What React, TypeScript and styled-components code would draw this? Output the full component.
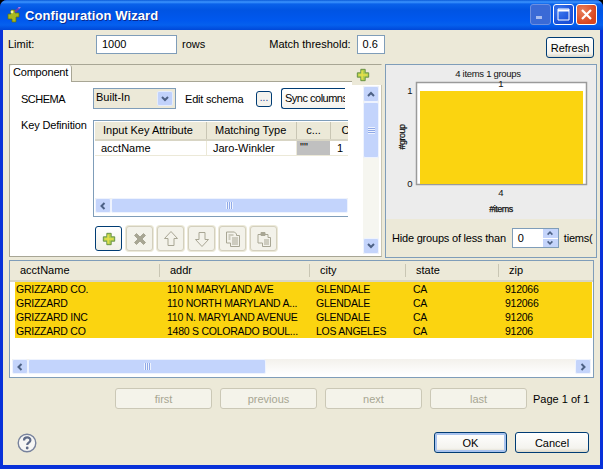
import { FC, ReactNode } from "react";
import styled, { createGlobalStyle } from "styled-components";

const GlobalStyle = createGlobalStyle`
  html, body {
    margin: 0;
    padding: 0;
    background: #000;
  }
  * {
    box-sizing: border-box;
  }
`;

const FONT = `"Liberation Sans", Arial, sans-serif`;
const FIELD_BORDER = "#7f9db9";
const FACE = "#ece9d8";
const YELLOW = "#fbd410";

const Window = styled.div`
  width: 603px;
  height: 469px;
  display: flex;
  flex-direction: column;
  overflow: hidden;
  border-radius: 7px 7px 0 0;
  background: #0831d9;
  font: 11px ${FONT};
  color: #000;
`;

const TitleBar = styled.div`
  height: 30px;
  flex: none;
  display: flex;
  align-items: center;
  padding: 0 6px 0 6px;
  background: linear-gradient(
    180deg,
    #0a5ad8 0,
    #3d95ff 2px,
    #0a62ea 4px,
    #0054e3 10px,
    #0058ee 20px,
    #0560ee 25px,
    #0048d8 30px
  );
`;

const TitleText = styled.span`
  margin-left: 3px;
  font: bold 13px ${FONT};
  letter-spacing: 0.1px;
  color: #fff;
  text-shadow: 1px 1px 0 #0a2a90;
`;

const CaptionButtons = styled.div`
  margin-left: auto;
  display: flex;
  gap: 2px;
  margin-top: -1px;
`;

const CaptionButton = styled.div<{ $close?: boolean; $off?: boolean }>`
  width: 21px;
  height: 21px;
  display: flex;
  align-items: center;
  justify-content: center;
  border: 1px solid ${(p) => (p.$off ? "#6d8fe0" : "#fff")};
  border-radius: 3px;
  background: ${(p) =>
    p.$close
      ? "radial-gradient(circle at 30% 30%, #e8805c, #d9461f 70%)"
      : p.$off
        ? "#3a6ad6"
        : "radial-gradient(circle at 30% 30%, #3c78ee, #1a50d8 70%)"};
`;

const Body = styled.div`
  flex: 1;
  margin: 0 3px 4px;
  padding: 5px 3px 0 6px;
  display: flex;
  flex-direction: column;
  background: ${FACE};
`;

const TopRow = styled.div`
  height: 28px;
  margin-left: -1px;
  display: flex;
  align-items: flex-start;
`;

const TopLabel = styled.span<{ $w?: number; $ml?: number }>`
  width: ${(p) => (p.$w ? `${p.$w}px` : "auto")};
  margin-left: ${(p) => p.$ml ?? 0}px;
  line-height: 18px;
  white-space: nowrap;
`;

const TextField = styled.div<{ $w: number; $ml?: number }>`
  width: ${(p) => p.$w}px;
  height: 19px;
  margin-left: ${(p) => p.$ml ?? 0}px;
  padding-left: 5px;
  line-height: 17px;
  background: #fff;
  border: 1px solid ${FIELD_BORDER};
`;

const PushButton = styled.button<{ $w: number; $default?: boolean }>`
  width: ${(p) => p.$w}px;
  height: 21px;
  padding: 0;
  font: 11px ${FONT};
  color: #000;
  border: 1px solid #003c74;
  border-radius: 3px;
  background: linear-gradient(180deg, #fff, #f4f3ee 80%, #dcd8c8);
  box-shadow: ${(p) => (p.$default ? "inset 0 0 0 2px #a9c3ee" : "none")};
`;

const RefreshButton = styled(PushButton)`
  margin: 2px 3px 0 auto;
`;

const MainRow = styled.div`
  margin-top: 1px;
  height: 194px;
  flex: none;
  display: flex;
`;

const TabFolder = styled.div`
  position: relative;
  width: 373px;
  height: 193px;
  flex: none;
  display: flex;
  flex-direction: column;
  border-left: 1px solid #a8a695;
  border-bottom: 1px solid #a8a695;
  border-right: 1px solid #c9c6b4;
`;

const TabStrip = styled.div`
  height: 18px;
  flex: none;
  display: flex;
  border-top: 1px solid #a8a695;
  border-bottom: 1px solid #a8a695;
`;

const Tab = styled.div`
  width: 62px;
  height: 17px;
  margin-bottom: -1px;
  padding-left: 3px;
  line-height: 15px;
  letter-spacing: -0.2px;
  background: #fff;
  border-right: 1px solid #a8a695;
  border-radius: 3px 3px 0 0;
`;

const CornerAdd = styled.div`
  position: absolute;
  top: 1px;
  right: -4px;
  width: 33px;
  height: 20px;
  padding-left: 4px;
  display: flex;
  align-items: center;
  background: ${FACE};
`;

const TabContent = styled.div`
  flex: 1;
  min-height: 0;
  display: flex;
  background: #fff;
`;

const FormArea = styled.div`
  flex: 1;
  min-width: 0;
  padding: 6px 0 0 11px;
`;

const SchemaRow = styled.div`
  display: flex;
  align-items: center;
  height: 21px;
`;

const FieldLabel = styled.span`
  width: 72px;
  flex: none;
  white-space: nowrap;
`;

const SchemaLabel = styled(FieldLabel)`
  letter-spacing: -0.5px;
`;

const Combo = styled.div`
  width: 83px;
  height: 21px;
  padding: 2px;
  display: flex;
  justify-content: space-between;
  border: 1px solid ${FIELD_BORDER};
  background: ${FACE};
`;

const ComboArrow = styled.div`
  width: 16px;
  height: 15px;
  display: flex;
  align-items: center;
  justify-content: center;
  background: #c1d2fb;
  border: 1px solid #e4ecfd;
  border-radius: 2px;
`;

const EditLabel = styled.span`
  margin-left: 9px;
  width: 71px;
  flex: none;
  letter-spacing: -0.2px;
`;

const DotsButton = styled.button`
  width: 16px;
  height: 16px;
  flex: none;
  padding: 0 0 3px;
  font: 10px ${FONT};
  color: #1c3f94;
  border: 1px solid #003c74;
  border-radius: 3px;
  background: #f4f3ee;
`;

const ClippedButton = styled.div`
  margin-left: 9px;
  width: 64px;
  height: 21px;
  padding-left: 3px;
  line-height: 19px;
  letter-spacing: -0.5px;
  overflow: hidden;
  white-space: nowrap;
  border: 1px solid #003c74;
  border-right: 0;
  border-radius: 3px 0 0 3px;
  background: linear-gradient(180deg, #fff, #f4f3ee);
`;

const KeyRow = styled.div`
  margin-top: 11px;
  display: flex;
  align-items: flex-start;
`;

const KeyLabel = styled(FieldLabel)`
  margin-top: -1px;
  letter-spacing: -0.15px;
`;

const KeyTable = styled.div`
  width: 255px;
  height: 97px;
  display: flex;
  flex-direction: column;
  padding: 1px 0 3px 1px;
  border: 1px solid ${FIELD_BORDER};
  border-right: 0;
  overflow: hidden;
`;

const KeyHeader = styled.div`
  height: 19px;
  flex: none;
  display: grid;
  grid-template-columns: 112px 90px 34px 30px;
  background: ${FACE};
  border-bottom: 2px solid #d8d5c4;
`;

const KeyHeadCell = styled.div<{ $center?: boolean }>`
  padding-left: ${(p) => (p.$center ? 0 : 8)}px;
  text-align: ${(p) => (p.$center ? "center" : "left")};
  line-height: 17px;
  white-space: nowrap;
  overflow: hidden;
  border-right: 1px solid #c9c6b4;
`;

const KeyBodyRow = styled.div`
  height: 15px;
  flex: none;
  display: grid;
  grid-template-columns: 112px 90px 34px 30px;
  border-bottom: 1px solid ${FACE};
`;

const KeyCell = styled.div<{ $pad: number; $grey?: boolean }>`
  padding-left: ${(p) => p.$pad}px;
  line-height: ${(p) => (p.$grey ? 13 : 14)}px;
  white-space: nowrap;
  background: ${(p) => (p.$grey ? "#c0c0c0" : "transparent")};
  border-right: 1px solid ${(p) => (p.$grey ? "#fff" : FACE)};
`;

const TableGap = styled.div`
  flex: 1;
`;

const Toolbar = styled.div`
  margin: 9px 0 0 74px;
  display: flex;
  gap: 4px;
`;

const ToolButton = styled.div<{ $on?: boolean }>`
  width: 27px;
  height: 25px;
  display: flex;
  align-items: center;
  justify-content: center;
  border: ${(p) => (p.$on ? "1px solid #003c74" : "1px solid #d4d0be")};
  border-radius: 3px;
  background: ${(p) => (p.$on ? "linear-gradient(180deg,#fff,#f0efe8)" : "#f3f2ea")};
  box-shadow: ${(p) => (p.$on ? "none" : "0 0 0 1px #ece9d8")};
`;

const HBar = styled.div`
  height: 15px;
  flex: none;
  display: flex;
  background: linear-gradient(180deg, #f3f1ec, #fefefe);
`;

const VBar = styled.div`
  width: 16px;
  margin: 4px 2px 2px 0;
  flex: none;
  display: flex;
  flex-direction: column;
  background: #f6f6f0;
`;

const ArrowBox = styled.div`
  width: 16px;
  flex: none;
  aspect-ratio: 1;
  display: flex;
  align-items: center;
  justify-content: center;
  background: #c4d4fb;
  border: 1px solid #eef3fe;
  border-radius: 2px;
`;

const Thumb = styled.div<{ $w?: number; $vertical?: boolean }>`
  width: ${(p) => (p.$vertical ? "16px" : p.$w ? `${p.$w}px` : "auto")};
  height: ${(p) => (p.$vertical ? `${p.$w}px` : "auto")};
  flex: ${(p) => (p.$w ? "none" : 1)};
  display: flex;
  align-items: center;
  justify-content: center;
  background: #c3d4fc;
  border: 1px solid #eef3fe;
  border-radius: 2px;
`;

const Grip = styled.div<{ $vertical?: boolean }>`
  width: 7px;
  height: 7px;
  background: ${(p) =>
    p.$vertical
      ? "repeating-linear-gradient(180deg, #eef3fe 0 1px, #8fa9e8 1px 2px)"
      : "repeating-linear-gradient(90deg, #eef3fe 0 1px, #8fa9e8 1px 2px)"};
`;

const ChartPanel = styled.div`
  width: 212px;
  margin-left: 3px;
  height: 194px;
  flex: none;
  display: flex;
  flex-direction: column;
  border: 1px solid ${FIELD_BORDER};
`;

const ChartSvg = styled.svg`
  display: block;
  flex: none;
  background: #ececec;
`;

const HideRow = styled.div`
  flex: 1;
  display: flex;
  align-items: center;
  padding-left: 6px;
  letter-spacing: -0.2px;
  overflow: hidden;
  white-space: nowrap;
`;

const Spinner = styled.div`
  width: 47px;
  height: 20px;
  flex: none;
  margin: 0 5px 0 6px;
  padding-left: 5px;
  display: flex;
  align-items: center;
  justify-content: space-between;
  background: #fff;
  border: 1px solid ${FIELD_BORDER};
`;

const SpinArrows = styled.div`
  width: 15px;
  height: 18px;
  display: flex;
  flex-direction: column;
  gap: 1px;
`;

const SpinArrow = styled.div`
  flex: 1;
  display: flex;
  align-items: center;
  justify-content: center;
  background: #c4d4fb;
`;

const ResultPanel = styled.div`
  margin-top: 2px;
  width: 585px;
  height: 118px;
  flex: none;
  display: flex;
  flex-direction: column;
  border: 1px solid ${FIELD_BORDER};
  background: #fff;
`;

const ResultHeader = styled.div`
  height: 21px;
  flex: none;
  display: grid;
  grid-template-columns: 150px 150px 96px 93px 1fr;
  background: ${FACE};
  border-bottom: 2px solid #d8d5c4;
`;

const ResultHead = styled.div`
  padding-left: 10px;
  line-height: 18px;
  position: relative;
  &:not(:last-child)::after {
    content: "";
    position: absolute;
    right: 0;
    top: 3px;
    height: 13px;
    width: 1px;
    background: #c9c6b4;
  }
`;

const ResultRows = styled.div`
  flex: 1;
  padding: 0 1px 0 5px;
`;

const ResultRow = styled.div`
  height: 14px;
  display: grid;
  grid-template-columns: 151px 149px 97px 92px 1fr;
  line-height: 14px;
  background: ${YELLOW};
`;

const ResultCell = styled.div`
  padding-left: 1px;
  font-size: 10.5px;
  letter-spacing: -0.25px;
  white-space: nowrap;
  overflow: hidden;
`;

const ResultBar = styled(HBar)`
  margin: 0 2px 3px 2px;
`;

const Pager = styled.div`
  margin-top: 10px;
  margin-left: 106px;
  height: 21px;
  display: flex;
  align-items: center;
  gap: 8px;
`;

const PageButton = styled.button`
  width: 97px;
  height: 21px;
  padding: 0;
  font: 11px ${FONT};
  color: #a7a692;
  border: 1px solid #cbc8b6;
  border-radius: 3px;
  background: #f4f3ea;
`;

const PageInfo = styled.span`
  margin-left: -2px;
`;

const Footer = styled.div`
  margin-top: 23px;
  display: flex;
  align-items: center;
  padding: 0 8px 0 8px;
  gap: 8px;
`;

const FooterSpacer = styled.div`
  flex: 1;
`;

const Icon: FC<{ size?: number; children: ReactNode }> = ({ size = 16, children }) => (
  <svg width={size} height={size} viewBox="0 0 16 16" style={{ display: "block" }}>
    {children}
  </svg>
);

const AppIcon = () => (
  <svg width="16" height="18" viewBox="0 0 16 18">
    <path d="M5 4h4v3h4v4h-3v5H6v-3H2V8h3z" fill="#a9b820" stroke="#5c7010" strokeWidth="0.7" />
    <path d="M9 6l4-4" stroke="#6a3fb0" strokeWidth="2" />
    <path d="M12 1l1 2 2-2z" fill="#b080e0" />
    <circle cx="6" cy="6" r="1.4" fill="#f4f4a0" />
  </svg>
);

const PlusIcon = () => (
  <Icon size={14}>
    <path d="M5.5 1.5h5v4h4v5h-4v4h-5v-4h-4v-5h4z" fill="#b4cf50" stroke="#5c8a3c" />
    <path d="M7 3v10M3 8h10" stroke="#e6e04a" strokeWidth="1.6" />
  </Icon>
);

const Chevron: FC<{ dir: "up" | "down" | "left" | "right"; size?: number }> = ({ dir, size = 10 }) => {
  const paths = {
    up: "M2 7l3-3 3 3",
    down: "M2 3l3 3 3-3",
    left: "M6.5 2L3.5 5l3 3",
    right: "M3.5 2l3 3-3 3",
  };
  return (
    <svg width={size} height={size} viewBox="0 0 10 10">
      <path d={paths[dir]} fill="none" stroke="#4d6185" strokeWidth="2" />
    </svg>
  );
};

const GREY = "#a8a694";

const ToolIcons = {
  remove: (
    <Icon>
      <path d="M2.5 4.5l2-2L8 6l3.5-3.5 2 2L10 8l3.5 3.5-2 2L8 10l-3.5 3.5-2-2L6 8z" fill={GREY} stroke={GREY} />
    </Icon>
  ),
  up: (
    <Icon>
      <path d="M8 .5l6.5 7H11v7H5v-7H1.5z" fill="none" stroke={GREY} />
    </Icon>
  ),
  down: (
    <Icon>
      <path d="M8 15.5l6.5-7H11v-7H5v7H1.5z" fill="none" stroke={GREY} />
    </Icon>
  ),
  copy: (
    <Icon>
      <path d="M1.5 1h8l2 2v1.5h3v11h-9V12h-4z" fill="none" stroke={GREY} />
      <path d="M7 7h6M7 9h6M7 11h6M7 13h6M3.5 4h5M3.5 6h2M3.5 8h2" stroke={GREY} />
    </Icon>
  ),
  paste: (
    <Icon>
      <path d="M2 3.5h10v3h2.5v9h-8V12H2z" fill="none" stroke={GREY} />
      <path d="M5 1.5h4v3H5z" fill={GREY} stroke={GREY} />
      <path d="M8 9h5M8 11h5M8 13h5" stroke={GREY} />
    </Icon>
  ),
};

const HelpIcon = () => (
  <svg width="20" height="20" viewBox="0 0 20 20" style={{ display: "block" }}>
    <circle cx="10" cy="10" r="8.8" fill="#f6f6f4" stroke="#77829c" strokeWidth="1.4" />
    <path
      d="M7 7.5c0-4 6.4-4 6.4-.3 0 2.5-3.2 2.4-3.2 4.8"
      fill="none"
      stroke="#5f6b88"
      strokeWidth="2.2"
    />
    <circle cx="10.2" cy="15" r="1.4" fill="#5f6b88" />
  </svg>
);

const Chart = () => (
  <ChartSvg width="210" height="154" fontFamily={FONT} fontSize="9.5" fill="#111">
    <text x="102" y="12" textAnchor="middle" letterSpacing="-0.3">
      4 items 1 groups
    </text>
    <rect x="30.5" y="17.5" width="170" height="102" fill="#fff" stroke="#9a9a9a" strokeWidth="1.5" />
    <rect x="34" y="26" width="163" height="93" fill={YELLOW} />
    <text x="115" y="22" textAnchor="middle">
      1
    </text>
    <text x="24" y="29" textAnchor="middle">
      1
    </text>
    <text x="24" y="122" textAnchor="middle">
      0
    </text>
    <text x="115" y="131" textAnchor="middle">
      4
    </text>
    <text x="115" y="147" textAnchor="middle" fontSize="9" letterSpacing="-0.5" stroke="#111" strokeWidth="0.25">
      #items
    </text>
    <text
      transform="translate(19 72) rotate(-90)"
      textAnchor="middle"
      fontSize="9"
      letterSpacing="-0.5"
      stroke="#111"
      strokeWidth="0.25"
    >
      #group
    </text>
  </ChartSvg>
);

const resultRows = [
  ["GRIZZARD CO.", "110 N MARYLAND AVE", "GLENDALE", "CA", "912066"],
  ["GRIZZARD", "110 NORTH MARYLAND A...", "GLENDALE", "CA", "912066"],
  ["GRIZZARD INC", "110 N. MARYLAND AVENUE", "GLENDALE", "CA", "91206"],
  ["GRIZZARD CO", "1480 S COLORADO BOUL...", "LOS ANGELES", "CA", "91206"],
];

const resultColumns = ["acctName", "addr", "city", "state", "zip"];

export default function App() {
  return (
    <>
      <GlobalStyle />
      <Window>
        <TitleBar>
          <AppIcon />
          <TitleText>Configuration Wizard</TitleText>
          <CaptionButtons>
            <CaptionButton $off>
              <svg width="11" height="11" viewBox="0 0 11 11">
                <rect x="1" y="7" width="6" height="3" fill="#a8bdf0" />
              </svg>
            </CaptionButton>
            <CaptionButton>
              <svg width="13" height="13" viewBox="0 0 13 13">
                <path d="M1 1h11v11H1z" fill="none" stroke="#fff" />
                <path d="M1 2.5h11" stroke="#fff" strokeWidth="2" />
              </svg>
            </CaptionButton>
            <CaptionButton $close>
              <svg width="13" height="13" viewBox="0 0 13 13">
                <path d="M2 2l9 9M11 2l-9 9" stroke="#fff" strokeWidth="2.2" />
              </svg>
            </CaptionButton>
          </CaptionButtons>
        </TitleBar>
        <Body>
          <TopRow>
            <TopLabel $w={88}>Limit:</TopLabel>
            <TextField $w={81}>1000</TextField>
            <TopLabel $ml={5}>rows</TopLabel>
            <TopLabel $ml={64}>Match threshold:</TopLabel>
            <TextField $w={28} $ml={6}>
              0.6
            </TextField>
            <RefreshButton $w={48}>Refresh</RefreshButton>
          </TopRow>
          <MainRow>
            <TabFolder>
              <TabStrip>
                <Tab>Component</Tab>
              </TabStrip>
              <CornerAdd>
                <PlusIcon />
              </CornerAdd>
              <TabContent>
                <FormArea>
                  <SchemaRow>
                    <SchemaLabel>SCHEMA</SchemaLabel>
                    <Combo>
                      Built-In
                      <ComboArrow>
                        <Chevron dir="down" />
                      </ComboArrow>
                    </Combo>
                    <EditLabel>Edit schema</EditLabel>
                    <DotsButton>...</DotsButton>
                    <ClippedButton>Sync columns</ClippedButton>
                  </SchemaRow>
                  <KeyRow>
                    <KeyLabel>Key Definition</KeyLabel>
                    <KeyTable>
                      <KeyHeader>
                        <KeyHeadCell>Input Key Attribute</KeyHeadCell>
                        <KeyHeadCell>Matching Type</KeyHeadCell>
                        <KeyHeadCell $center>c...</KeyHeadCell>
                        <KeyHeadCell $center>C</KeyHeadCell>
                      </KeyHeader>
                      <KeyBodyRow>
                        <KeyCell $pad={6}>acctName</KeyCell>
                        <KeyCell $pad={6}>Jaro-Winkler</KeyCell>
                        <KeyCell $pad={3} $grey>
                          ""
                        </KeyCell>
                        <KeyCell $pad={6}>1</KeyCell>
                      </KeyBodyRow>
                      <TableGap />
                      <HBar>
                        <ArrowBox>
                          <Chevron dir="left" />
                        </ArrowBox>
                        <Thumb>
                          <Grip />
                        </Thumb>
                      </HBar>
                    </KeyTable>
                  </KeyRow>
                  <Toolbar>
                    <ToolButton $on>
                      <PlusIcon />
                    </ToolButton>
                    <ToolButton>{ToolIcons.remove}</ToolButton>
                    <ToolButton>{ToolIcons.up}</ToolButton>
                    <ToolButton>{ToolIcons.down}</ToolButton>
                    <ToolButton>{ToolIcons.copy}</ToolButton>
                    <ToolButton>{ToolIcons.paste}</ToolButton>
                  </Toolbar>
                </FormArea>
                <VBar>
                  <ArrowBox>
                    <Chevron dir="up" />
                  </ArrowBox>
                  <Thumb $vertical $w={56}>
                    <Grip $vertical />
                  </Thumb>
                  <TableGap />
                  <ArrowBox>
                    <Chevron dir="down" />
                  </ArrowBox>
                </VBar>
              </TabContent>
            </TabFolder>
            <ChartPanel>
              <Chart />
              <HideRow>
                Hide groups of less than
                <Spinner>
                  0
                  <SpinArrows>
                    <SpinArrow>
                      <Chevron dir="up" size={8} />
                    </SpinArrow>
                    <SpinArrow>
                      <Chevron dir="down" size={8} />
                    </SpinArrow>
                  </SpinArrows>
                </Spinner>
                tiems(
              </HideRow>
            </ChartPanel>
          </MainRow>
          <ResultPanel>
            <ResultHeader>
              {resultColumns.map((c) => (
                <ResultHead key={c}>{c}</ResultHead>
              ))}
            </ResultHeader>
            <ResultRows>
              {resultRows.map((row) => (
                <ResultRow key={row.join()}>
                  {row.map((cell, i) => (
                    <ResultCell key={i}>{cell}</ResultCell>
                  ))}
                </ResultRow>
              ))}
            </ResultRows>
            <ResultBar>
              <ArrowBox>
                <Chevron dir="left" />
              </ArrowBox>
              <Thumb $w={238}>
                <Grip />
              </Thumb>
              <TableGap />
              <ArrowBox>
                <Chevron dir="right" />
              </ArrowBox>
            </ResultBar>
          </ResultPanel>
          <Pager>
            <PageButton>first</PageButton>
            <PageButton>previous</PageButton>
            <PageButton>next</PageButton>
            <PageButton>last</PageButton>
            <PageInfo>Page 1 of 1</PageInfo>
          </Pager>
          <Footer>
            <HelpIcon />
            <FooterSpacer />
            <PushButton $w={73} $default>
              OK
            </PushButton>
            <PushButton $w={74}>Cancel</PushButton>
          </Footer>
        </Body>
      </Window>
    </>
  );
}
